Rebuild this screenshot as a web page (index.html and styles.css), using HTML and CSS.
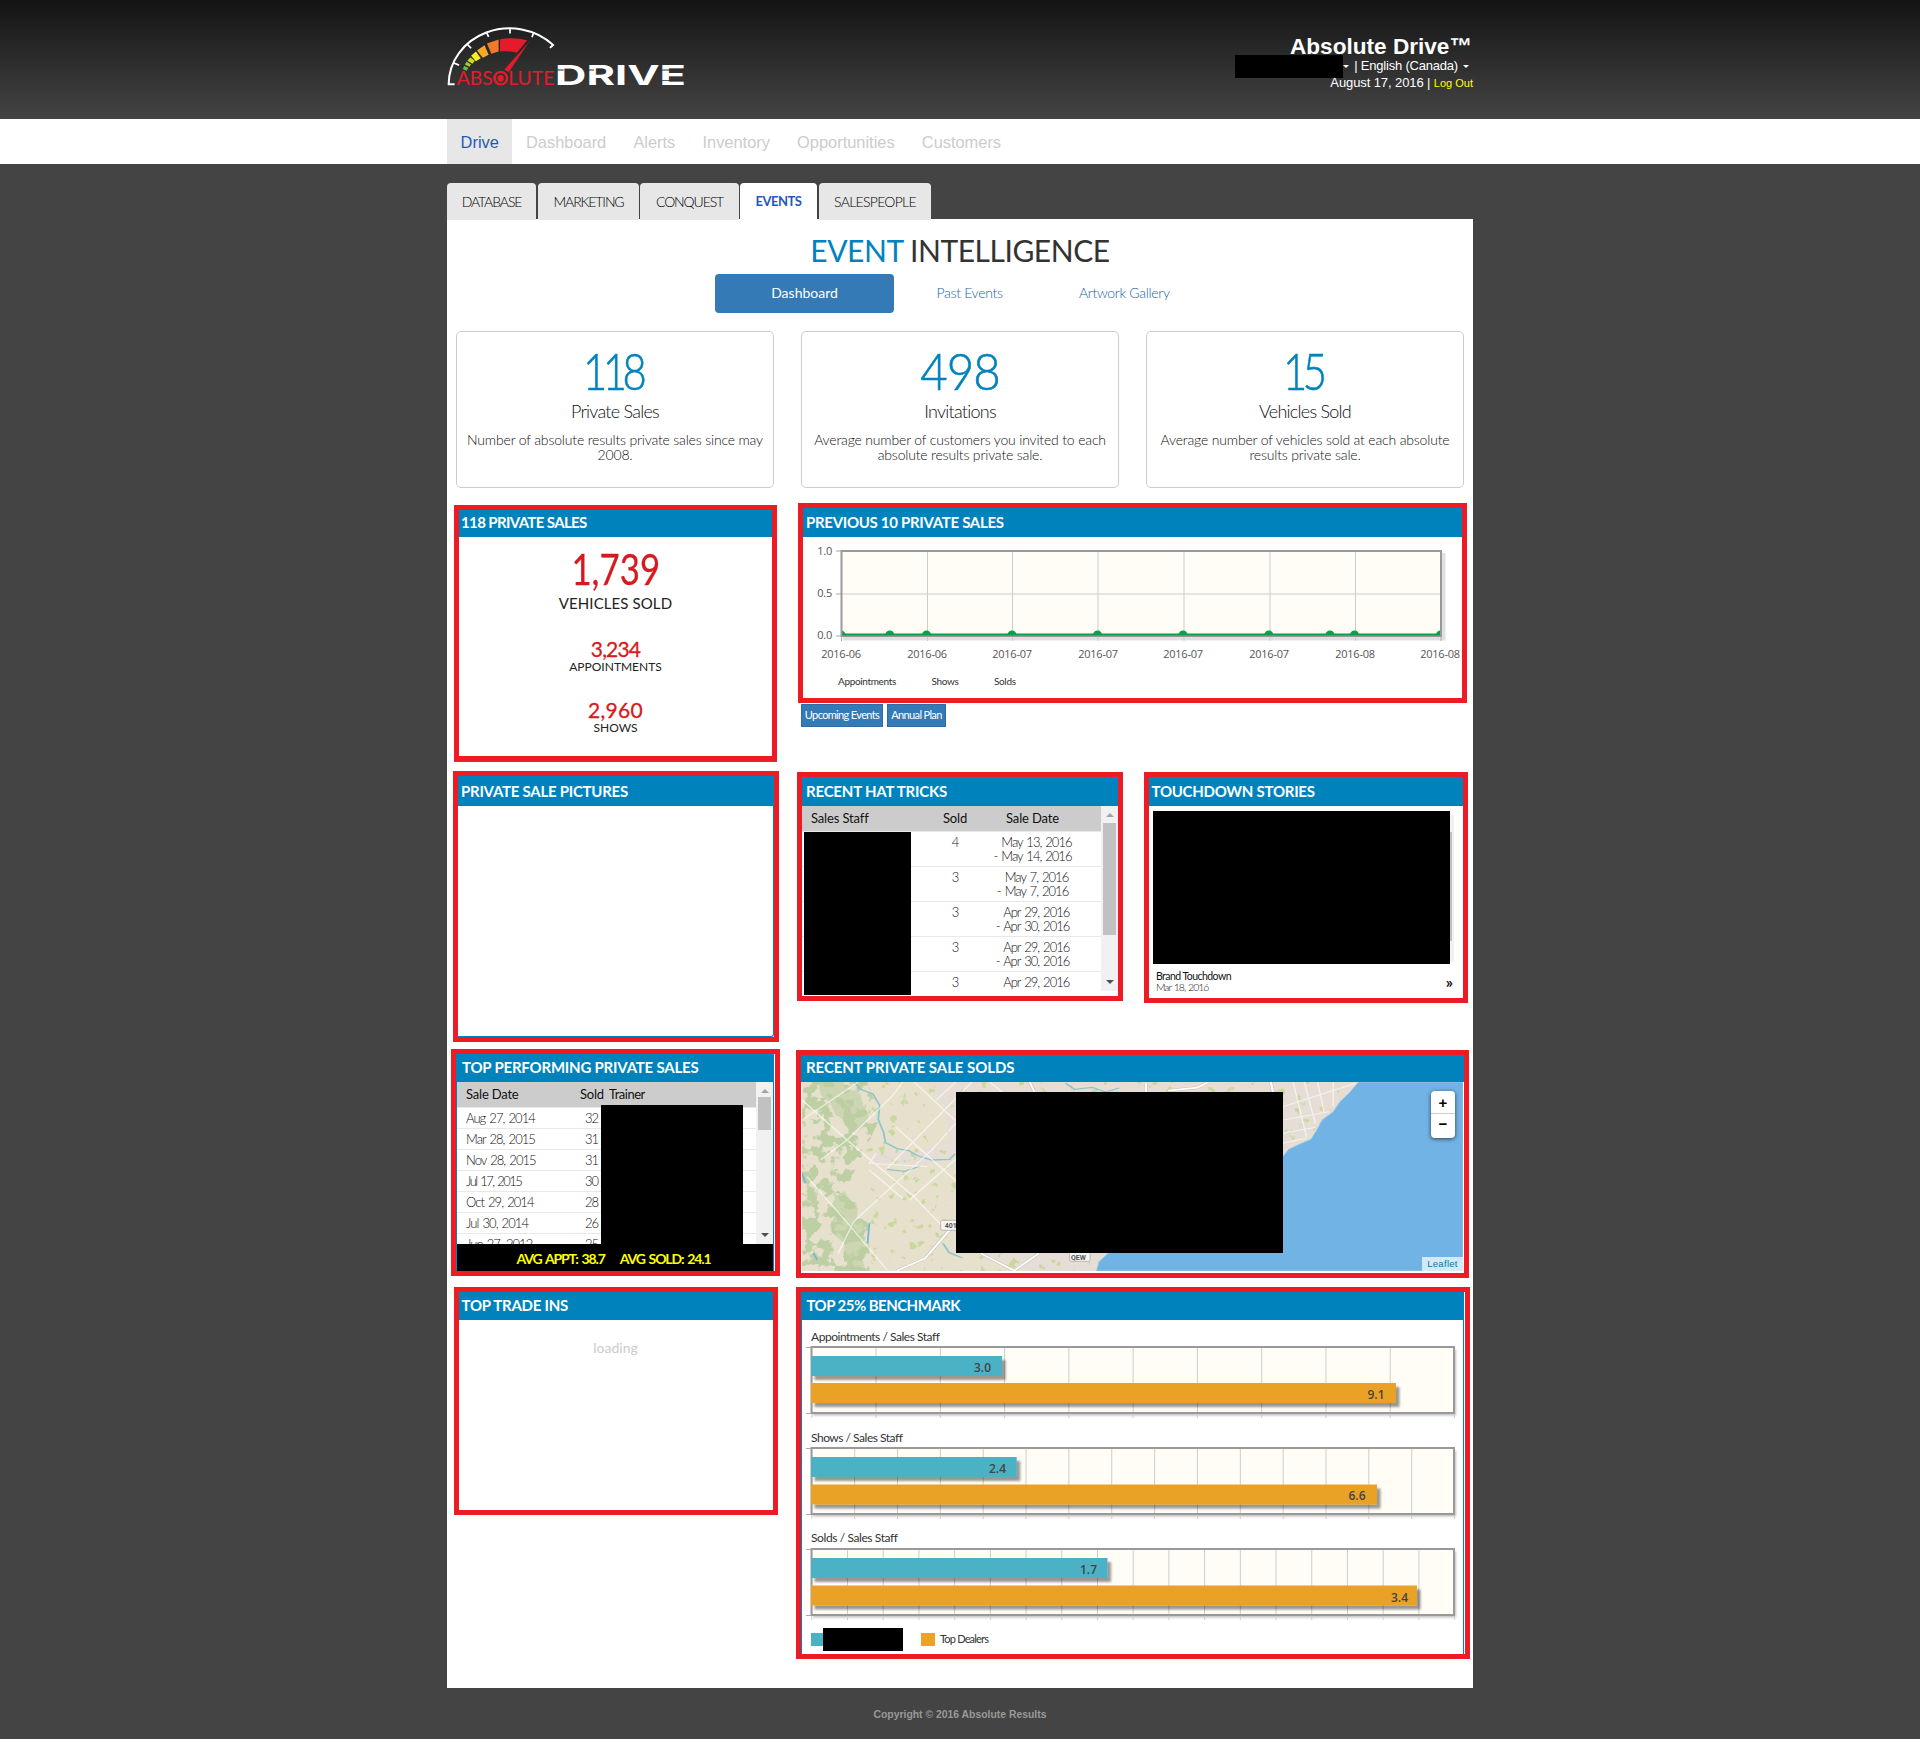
FILE: index.html
```
<!DOCTYPE html>
<html lang="en">
<head>
<meta charset="utf-8">
<title>Absolute Drive</title>
<link rel="stylesheet" href="styles.css">
</head>
<body>
<header class="top">
  <div class="wrap top-row">
    <svg class="logo" viewBox="49 75 700 190" preserveAspectRatio="none" role="img" aria-label="Absolute Drive">
      <g fill="none" stroke="#fff" stroke-width="6">
        <path d="M71 254H54A177 168 0 0 1 357 135L348 144"/>
        <path stroke-width="5" d="M67 189l17 7M108 133l11 12M164 98l6 13M232 86v15M301 97l-5 15"/>
      </g>
      <path fill="#e51b2b" d="M203 118Q245 110 282 121L252 159Q228 152 203 155Z"/>
      <path fill="#f07a2a" d="M165 131L199 119V155L178 162Z"/>
      <path fill="#faa927" d="M136 152L158 136L170 165L153 174Z"/>
      <path fill="#fdee1c" d="M119 168L133 155L147 175L133 184Z"/>
      <path fill="#cddc29" d="M108 183L117 173L130 183L123 192Z"/>
      <path fill="#9fce3a" d="M101 194L106 186L119 194L114 201Z"/>
      <path fill="#6cbd45" d="M95 208L99 199L111 204L106 213Z"/>
      <text class="logo-abs" x="77" y="257" textLength="284" lengthAdjust="spacingAndGlyphs">ABSOLUTE</text>
      <path fill="#e51b2b" stroke="#2c2c2c" stroke-width="2" d="M292 120L229 218L214 210Z"/>
      <ellipse cx="205" cy="236" rx="19" ry="19" fill="none" stroke="#e51b2b" stroke-width="5"/>
      <ellipse cx="205" cy="236" rx="9" ry="10" fill="#e51b2b"/>
      <text class="logo-drive" x="363" y="257" textLength="380" lengthAdjust="spacingAndGlyphs">DRIVE</text>
      <path stroke="#2e2e2e" stroke-width="3" d="M366 211H388M452 211H476M672 211H742M672 242H742"/>
    </svg>
    <div class="account">
      <div class="brand">Absolute Drive™</div>
      <div class="lang"><i class="caret"></i><span>| English (Canada)</span><i class="caret"></i></div>
      <div class="date"><span>August 17, 2016 |</span> <a>Log Out</a></div>
      <div class="redact"></div>
    </div>
  </div>
</header>
<nav class="main-nav"><div class="wrap nav-row">
  <a class="on">Drive</a><a>Dashboard</a><a>Alerts</a><a>Inventory</a><a>Opportunities</a><a>Customers</a>
</div></nav>

<div class="wrap tabs">
  <a class="t1">DATABASE</a><a class="t2">MARKETING</a><a class="t3">CONQUEST</a><a class="t4 on">EVENTS</a><a class="t5">SALESPEOPLE</a>
</div>

<main class="wrap page">
  <h1><span>EVENT</span> INTELLIGENCE</h1>
  <div class="pills"><a class="on">Dashboard</a><a class="p2">Past Events</a><a class="p3">Artwork Gallery</a></div>

  <section class="stats">
    <div class="stat"><b class="n118">118</b><h2>Private Sales</h2><p>Number of absolute results private sales since may<br>2008.</p></div>
    <div class="stat"><b>498</b><h2>Invitations</h2><p>Average number of customers you invited to each<br>absolute results private sale.</p></div>
    <div class="stat"><b class="n15">15</b><h2>Vehicles Sold</h2><p>Average number of vehicles sold at each absolute<br>results private sale.</p></div>
  </section>

  <section class="board">
    <article class="widget w-sales">
      <h3>118 PRIVATE SALES</h3>
      <div class="totals">
        <b class="big">1,739</b><span class="biglab">VEHICLES SOLD</span>
        <b>3,234</b><span>APPOINTMENTS</span>
        <b class="last">2,960</b><span>SHOWS</span>
      </div>
    </article>

    <div class="span2 prev-col">
      <article class="widget w-prev">
        <h3>PREVIOUS 10 PRIVATE SALES</h3>
        <svg class="chart" width="659" height="161" viewBox="803 537 659 161">
          <path d="M1443.500 553V638.500H843" fill="none" stroke="#000" stroke-opacity=".12" stroke-width="4"/>
          <rect x="841.500" y="551" width="599" height="84.500" fill="#fffdf6"/>
          <path d="M927.500 551v90M1012.500 551v90M1098 551v90M1184 551v90M1270 551v90M1355.500 551v90M841 594H1441" stroke="#ccc" fill="none"/>
          <path d="M836 551h6M836 594h6M836 636h6M841.500 636v5M1441 636v5" stroke="#aaa" fill="none"/>
          <g fill="#0a9f4b">
            <rect x="841" y="633.500" width="600" height="2"/>
            <path d="M841 630.500a4.500 4.500 0 0 1 4.500 4.500h-4.500zM885.300 635a4.500 4.500 0 0 1 9 0zM922 635a4.500 4.500 0 0 1 9 0zM1007.500 635a4.500 4.500 0 0 1 9 0zM1093 635a4.500 4.500 0 0 1 9 0zM1178.500 635a4.500 4.500 0 0 1 9 0zM1264.300 635a4.500 4.500 0 0 1 9 0zM1325.500 635a4.500 4.500 0 0 1 9 0zM1350 635a4.500 4.500 0 0 1 9 0zM1436 635a4.500 4.500 0 0 1 4.500-4.500v4.500z"/>
          </g>
          <rect x="841.500" y="551" width="599.500" height="85" fill="none" stroke="#999" stroke-width="2"/>
          <path d="M842.500 634.800H1440" stroke="#0a9f4b" stroke-width="1.600"/>
          <g class="axis" text-anchor="end"><text x="832" y="555">1.0</text><text x="832" y="597">0.5</text><text x="832" y="639">0.0</text></g>
          <g class="axis" text-anchor="middle"><text x="841" y="658">2016-06</text><text x="927" y="658">2016-06</text><text x="1012" y="658">2016-07</text><text x="1098" y="658">2016-07</text><text x="1183" y="658">2016-07</text><text x="1269" y="658">2016-07</text><text x="1355" y="658">2016-08</text><text x="1440" y="658">2016-08</text></g>
          <g class="legend10"><text x="838" y="685">Appointments</text><text x="931.500" y="685">Shows</text><text x="994" y="685">Solds</text></g>
        </svg>
      </article>
      <div class="buttons"><a>Upcoming Events</a><a class="plan">Annual Plan</a></div>
    </div>

    <article class="widget w-pics">
      <h3>PRIVATE SALE PICTURES</h3>
      <div class="pics"></div>
    </article>

    <article class="widget w-hat">
      <h3>RECENT HAT TRICKS</h3>
      <div class="scroller">
        <div class="rows">
          <div class="hrow head"><span>Sales Staff</span><span>Sold</span><span>Sale Date</span></div>
          <div class="hrow"><span></span><span>4</span><span><i>May 13, 2016<br>- May 14, 2016</i></span></div>
          <div class="hrow"><span></span><span>3</span><span><i>May 7, 2016<br>- May 7, 2016</i></span></div>
          <div class="hrow"><span></span><span>3</span><span><i>Apr 29, 2016<br>- Apr 30, 2016</i></span></div>
          <div class="hrow"><span></span><span>3</span><span><i>Apr 29, 2016<br>- Apr 30, 2016</i></span></div>
          <div class="hrow"><span></span><span>3</span><span><i>Apr 29, 2016<br>- Apr 30, 2016</i></span></div>
        </div>
        <div class="bar"><i class="up"></i><i class="thumb"></i><i class="down"></i></div>
      </div>
      <div class="redact"></div>
    </article>

    <article class="widget w-touch">
      <h3>TOUCHDOWN STORIES</h3>
      <div class="story"><div class="story-img"></div><div class="story-bar"><i></i></div></div>
      <div class="story-foot"><div><div class="story-name">Brand Touchdown</div><div class="story-date">Mar 18, 2016</div></div><span>»</span></div>
    </article>

    <article class="widget w-top">
      <h3>TOP PERFORMING PRIVATE SALES</h3>
      <div class="scroller">
        <div class="rows">
          <div class="trow head"><span>Sale Date</span><span>Sold</span><span>Trainer</span></div>
          <div class="trow"><span>Aug 27, 2014</span><span>32</span></div>
          <div class="trow"><span>Mar 28, 2015</span><span>31</span></div>
          <div class="trow"><span>Nov 28, 2015</span><span>31</span></div>
          <div class="trow"><span class="tight">Jul 17, 2015</span><span>30</span></div>
          <div class="trow"><span>Oct 29, 2014</span><span>28</span></div>
          <div class="trow"><span>Jul 30, 2014</span><span>26</span></div>
          <div class="trow"><span>Jun 27, 2012</span><span>25</span></div>
        </div>
        <div class="bar"><i class="up"></i><i class="thumb"></i><i class="down"></i></div>
      </div>
      <div class="avg"><span>AVG APPT: 38.7</span><span>AVG SOLD: 24.1</span></div>
      <div class="redact"></div>
    </article>

    <article class="widget w-map span2">
      <h3>RECENT PRIVATE SALE SOLDS</h3>
      <div class="map">
        <svg width="661" height="189" viewBox="49 126 1482 567" preserveAspectRatio="none">
          <defs>
            <filter id="woods" x="0" y="0" width="1" height="1" color-interpolation-filters="sRGB"><feTurbulence type="fractalNoise" baseFrequency=".035 .028" numOctaves="4" seed="8"/><feColorMatrix values="0 0 0 0 .74  0 0 0 0 .81  0 0 0 0 .64  14 0 0 0 -6.800"/><feComposite in2="SourceGraphic" operator="in"/></filter>
            <filter id="groves" x="0" y="0" width="1" height="1" color-interpolation-filters="sRGB"><feTurbulence type="fractalNoise" baseFrequency=".045 .035" numOctaves="3" seed="21"/><feColorMatrix values="0 0 0 0 .79  0 0 0 0 .85  0 0 0 0 .62  14 0 0 0 -9.200"/><feComposite in2="SourceGraphic" operator="in"/></filter>
          </defs>
          <path fill="#e6e0cd" d="M49 126H1531V693H49Z"/>
          <path fill="#e6ddd6" d="M330 126H1300L1240 215L1190 295L1127 345V600L700 693H560L450 640L400 600V340L300 380L200 370L215 330L300 340L380 300L370 200Z"/>
          <path filter="url(#groves)" fill="#000" d="M200 126H1290L1180 300L1127 345V500L700 693H180Z"/>
          <path filter="url(#woods)" fill="#000" d="M49 126H195L225 230L190 330L150 440L200 560V693H49Z"/>
          <path fill="#bccfa2" fill-opacity=".6" d="M115 445l12 22 18-14 12 32 18 20-4 30 20 26-12 34 14 28-8 34 6 36h-30l-6-30-14-22 4-30-20-22-14-30 10-28-8-30 10-24zM85 126h56l12 20 26 14 8 40 12 30-14 34-20 14-16-34-24-18-14-40-20-20z"/>
          <g fill="none" stroke="#8ec4cf" stroke-width="4">
            <path d="M165 126l15 22 28 14 15 34-3 42 12 40 4 30 26 18 26 6 22 16 30 12 40-2 12-16"/>
            <path d="M240 388l40 6 34-16M365 610l14 28 30 16M640 130l20 18 40-6 30 14 30-12"/>
            <path stroke="#73b3e4" d="M200 550l-4 60M49 400l8 30M75 640l8 20"/>
          </g>
          <g fill="none" stroke="#fff" stroke-opacity=".6" stroke-width="3.500">
            <path d="M49 180L150 300L300 470L365 560M49 240L175 126M60 410L155 555L240 690M90 360L150 300L250 170L275 126M165 545L340 330L400 240M240 385L430 126M215 340L200 370L330 380M260 262L400 430M275 475L200 390M300 126L400 250M130 640L165 545M470 126L520 180M350 180L394 126M290 480L400 350"/>
            <path stroke-width="3" d="M1127 200L1290 130M1127 240L1230 215M1127 280L1200 262M1150 126L1180 290M1175 126L1200 250M1205 126L1220 220M1240 126V200M1127 310L1180 295"/>
          </g>
          <g fill="none" stroke="#c9c1ba" stroke-width="8"><path d="M262 692L325 655L380 570L400 540M450 640L525 692L580 640M560 126L570 156M870 152L935 143L960 126M820 130V156M1100 126L1105 156"/></g>
          <g fill="none" stroke="#fff" stroke-width="5"><path d="M262 692L325 655L380 570L400 540M450 640L525 692L580 640M560 126L570 156M870 152L935 143L960 126M820 130V156M1100 126L1105 156"/></g>
          <path fill="#72b3e5" stroke="#9ad0dc" stroke-width="2" d="M1297 126L1275 160L1255 185L1240 215L1215 240L1203 270L1190 298L1160 315L1140 328L1127 350L900 560L735 640L715 665L709 693H1531V126Z"/>
          <rect x="360" y="541" width="44" height="30" rx="4" fill="#f7f5f2" stroke="#aaa" stroke-width="2"/>
          <rect x="649" y="636" width="46" height="28" rx="4" fill="#f7f5f2" stroke="#aaa" stroke-width="2"/>
          <g class="shield"><text transform="translate(369 564) scale(2.240 3)">401</text><text transform="translate(652 661) scale(2.240 3)">QEW</text></g>
        </svg>
        <div class="redact"></div>
        <div class="zoom"><span>+</span><span>−</span></div>
        <div class="leaflet">Leaflet</div>
      </div>
    </article>

    <article class="widget w-trade">
      <h3>TOP TRADE INS</h3>
      <div class="loading">loading</div>
    </article>

    <article class="widget w-bench span2">
      <h3>TOP 25% BENCHMARK</h3>
      <svg class="chart" width="661" height="334" viewBox="802 1320 661 334">
        <defs>
          <pattern id="g10" patternUnits="userSpaceOnUse" x="811.300" y="0" width="64.270" height="2000"><path d="M.5 0V2000" stroke="#ccc"/></pattern>
          <pattern id="g15" patternUnits="userSpaceOnUse" x="811.300" y="0" width="42.850" height="2000"><path d="M.5 0V2000" stroke="#ccc"/></pattern>
          <pattern id="g18" patternUnits="userSpaceOnUse" x="811.300" y="0" width="35.710" height="2000"><path d="M.5 0V2000" stroke="#ccc"/></pattern>
          <filter id="sh" x="-5%" y="-20%" width="110%" height="160%"><feDropShadow dx="3.500" dy="4" stdDeviation="1.300" flood-opacity=".4"/></filter>
          <filter id="fr" x="-2%" y="-5%" width="104%" height="115%"><feDropShadow dx="2" dy="2.500" stdDeviation="1" flood-opacity=".25"/></filter>
          <clipPath id="plots"><path d="M811 1340H1470V1660H811Z"/></clipPath>
        </defs>
        <g class="bench-lab"><text x="811" y="1340.500" textLength="129">Appointments / Sales Staff</text><text x="811" y="1441.500" textLength="92">Shows / Sales Staff</text><text x="811" y="1542" textLength="87">Solds / Sales Staff</text></g>
        <g fill="#fffdf6" filter="url(#fr)"><rect x="811" y="1347" width="643" height="66"/><rect x="811" y="1448" width="643" height="66"/><rect x="811" y="1549" width="643" height="66"/></g>
        <rect x="811" y="1347" width="644" height="71" fill="url(#g10)"/>
        <rect x="811" y="1448" width="644" height="71" fill="url(#g15)"/>
        <rect x="811" y="1549" width="644" height="71" fill="url(#g18)"/>
        <g fill="none" stroke="#999" stroke-width="2"><rect x="811.500" y="1347" width="642.500" height="66"/><rect x="811.500" y="1448" width="642.500" height="66"/><rect x="811.500" y="1549" width="642.500" height="66"/></g>
        <g clip-path="url(#plots)">
          <g fill="#4bb2c5" filter="url(#sh)"><rect x="811" y="1356" width="191" height="20"/><rect x="811" y="1457" width="205.700" height="20"/><rect x="811" y="1558" width="296.500" height="20"/></g>
          <g fill="#eaa228" filter="url(#sh)"><rect x="811" y="1383" width="585" height="20"/><rect x="811" y="1484.500" width="566" height="20"/><rect x="811" y="1585.500" width="606" height="20"/></g>
        </g>
        <path stroke="#aaa" d="M806 1347.500h5M806 1413.500h5M806 1448.500h5M806 1514.500h5M806 1549.500h5M806 1615.500h5"/>
        <g class="val" text-anchor="end"><text x="991" y="1372">3.0</text><text x="1384.500" y="1399">9.1</text><text x="1006" y="1473">2.4</text><text x="1365.500" y="1500">6.6</text><text x="1097" y="1574">1.7</text><text x="1408" y="1602">3.4</text></g>
        <rect x="811" y="1633" width="14" height="13" fill="#4bb2c5"/><rect x="823" y="1628" width="80" height="23"/>
        <rect x="921" y="1633" width="14" height="13" fill="#eaa228"/>
        <text class="legend11" x="940" y="1642.500" textLength="49">Top Dealers</text>
      </svg>
    </article>
  </section>
</main>
<footer>Copyright © 2016 Absolute Results</footer>
</body>
</html>
```
FILE: styles.css
```
* { box-sizing: border-box; }
body { margin: 0; background: #444; color: #111; font: 300 14px/1 Lato, sans-serif; min-height: 1739px; }
h1, h2, h3, p { margin: 0; font-weight: inherit; }
i { font-style: normal; }
.wrap { width: 1026px; margin: 0 auto; }
.redact { position: absolute; background: #000; }

/* header */
.top { height: 119px; background: linear-gradient(#141414, #444); }
.top-row { display: flex; justify-content: space-between; }
.logo { width: 241px; height: 63px; margin-top: 25px; }
.logo-abs { font: 400 60px Lato, sans-serif; fill: #e51b2b; }
.logo-drive { font: 700 82px Inter, sans-serif; fill: #fff; }
.account { position: relative; padding-top: 35px; color: #fff; font: 13px/17px "Liberation Sans", Arial, sans-serif; text-align: right; }
.brand { font-size: 22.600px; font-weight: bold; line-height: 24px; padding-right: 1px; }
.lang { height: 15px; line-height: 11px; display: flex; justify-content: flex-end; align-items: flex-start; padding-top: 1px; gap: 5px; padding-right: 4px; letter-spacing: -.2px; }
.date { line-height: 18px; letter-spacing: -.1px; }
.date a { color: #ff0; font-size: 11px; letter-spacing: 0; }
.caret { border: 3.500px solid transparent; border-top-color: #fff; border-bottom: 0; margin-top: 5px; }
.account .redact { right: 130px; top: 55px; width: 108px; height: 23px; }

.main-nav { height: 45px; background: #fff; }
.nav-row { display: flex; }
.nav-row a { padding: 0 13.600px; font: 16.400px/47px "Liberation Sans", Arial, sans-serif; height: 45px; color: #ccc; }
.nav-row .on { background: #e7e7e7; color: #1f5bb5; }

.tabs { display: flex; margin-top: 19px; margin-bottom: -1px; position: relative; }
.tabs a { height: 37px; line-height: 37px; background: #e7e7e7; color: #000; text-align: center; border-radius: 4px 4px 0 0; letter-spacing: -1.100px; }
.t1 { width: 89px; margin-right: 2px; }
.t2 { width: 101px; margin-right: 1px; }
.t3 { width: 99px; margin-right: 1px; }
.t4 { width: 77px; margin-right: 2px; }
.t5 { width: 112px; }
.tabs .t5 { letter-spacing: -.7px; }
.tabs .on { background: #fff; color: #1f5bb5; font-weight: 700; font-size: 13px; letter-spacing: -.5px; }

/* page */
.page { background: #fff; height: 1469px; }
h1 { height: 55px; padding-top: 13px; font-size: 30px; line-height: 36px; font-weight: 400; text-align: center; color: #333; letter-spacing: -.45px; }
h1 span { color: #0083bd; }
.pills { display: flex; height: 39px; padding-left: 268px; line-height: 38px; color: #1d63a5; }
.pills a { letter-spacing: -.3px; }
.pills .on { width: 179px; text-align: center; background: #337ab7; color: #fff; border-radius: 4px; font-weight: 400; letter-spacing: 0; }
.p2 { margin-left: 42.500px; width: 142.500px; }
.stats { display: flex; gap: 27px; padding: 18px 9px 0; }
.stat { width: 318px; height: 157px; border: 1px solid #ccc; border-radius: 5px; text-align: center; }
.stat b { display: block; margin-top: 11px; height: 56px; font-size: 51px; line-height: 56px; font-weight: 300; color: #0083bd; letter-spacing: -1px; transform: scaleX(.93); -webkit-text-stroke: .6px #0083bd; }
.stat .n118, .stat .n15 { letter-spacing: -5.500px; text-indent: -5.500px; transform: scaleX(.82); }
.stat h2 { font-size: 18px; line-height: 24px; letter-spacing: -.75px; }
.stat p { margin-top: 9px; line-height: 15px; letter-spacing: -.17px; }

.board { display: grid; grid-template-columns: 349px 344px 333px; grid-template-rows: 268px 278px 238px 400px; padding-top: 15px; }
.span2 { grid-column: span 2; }
.widget { position: relative; border: 5px solid #ed1c24; background: #fff; }
.widget h3 { display: flex; align-items: flex-end; height: 28px; background: #0083bd; color: #fff; font: 700 15px/30px Lato, sans-serif; letter-spacing: -.26px; padding-left: 6px; white-space: nowrap; }
.chart { display: block; }

.w-sales { margin: 2px 0 0 7px; width: 323px; height: 256px; box-shadow: 0 1px 0 #0083bd; }
.w-sales h3 { height: 27px; padding-left: 2px; letter-spacing: -.63px; }
.totals { display: flex; flex-direction: column; align-items: center; color: #222; }
.totals b { font-weight: 400; color: #d71920; font-size: 21px; line-height: 24px; margin-top: 25px; letter-spacing: -.8px; -webkit-text-stroke: .3px #d71920; }
.totals .big { font-size: 43px; line-height: 40px; margin-top: 12px; letter-spacing: 0; transform: scaleX(.81); }
.totals span { font-size: 12px; line-height: 12px; font-weight: 400; }
.totals .biglab { font-size: 15px; line-height: 18px; margin-top: 5px; letter-spacing: .1px; }
.totals .last { letter-spacing: .3px; }

.w-prev { margin-left: 2px; width: 669px; height: 200px; }
.w-prev h3 { height: 29px; padding-left: 3px; letter-spacing: -.3px; }
.axis { font: 11px "Open Sans", sans-serif; letter-spacing: -.25px; fill: #555; }
.legend10 { font: 400 10px Lato, sans-serif; letter-spacing: -.35px; fill: #333; }
.legend11 { font: 400 11px Lato, sans-serif; fill: #333; }
.buttons { display: flex; gap: 4px; margin: 1px 0 0 5px; }
.buttons a { width: 82px; height: 23px; background: #337ab7; border: 1px solid #2e6da4; color: #fff; font: 400 11px/20px Lato, sans-serif; text-align: center; letter-spacing: -.65px; white-space: nowrap; }
.buttons .plan { width: 59px; }

.w-pics { margin-left: 6px; width: 326px; height: 271px; }
.w-pics h3 { height: 30px; padding-left: 3px; width: 316px; }
.pics { width: 316px; height: 231px; border: solid #0083bd; border-width: 0 1px 1px 0; border-radius: 0 0 3px 0; }

.scroller { display: flex; overflow: hidden; }
.rows { font-size: 13px; color: #111; }
.bar { width: 17px; background: #f1f1f1; display: flex; flex-direction: column; align-items: center; }
.up { border: 4px solid transparent; border-bottom-color: #a3a3a3; border-top: 0; margin-top: 7px; }
.thumb { width: 13px; background: #c1c1c1; margin-top: 6px; }
.down { border: 4px solid transparent; border-top-color: #505050; border-bottom: 0; margin: auto 0 7px; }

.w-hat { margin: 1px 0 0 1px; width: 326px; height: 229px; }
.w-hat h3 { height: 29px; padding-left: 4px; letter-spacing: -.2px; }
.w-hat .scroller { height: 185px; }
.hrow { display: grid; grid-template-columns: 133px 40px 126px; height: 35px; border-bottom: 1px solid #e8e8e8; padding-top: 3px; line-height: 14px; text-align: center; letter-spacing: -1px; word-spacing: 1.500px; }
.hrow i { display: inline-block; text-align: right; margin-right: 11px; }
.w-hat .head { height: 26px; background: #ccc; padding-top: 0; line-height: 25px; font-weight: 400; letter-spacing: -.15px; word-spacing: 0; }
.head span:first-child { text-align: left; padding-left: 9px; }
.w-hat .head span:last-child { padding-right: 11px; }
.w-hat .thumb { height: 112px; }
.w-hat .redact { left: 2px; top: 55px; width: 107px; height: 163px; }

.w-touch { margin: 1px 0 0 4px; width: 324px; height: 231px; }
.w-touch h3 { height: 29px; padding-left: 2.500px; }
.story { display: flex; padding: 5px 0 0 4px; }
.story-img { width: 297px; height: 153px; background: #000; }
.story-bar { width: 4px; height: 147px; margin-top: 4px; background: #f1f1f1; }
.story-bar i { display: block; width: 2px; height: 109px; margin-top: 17px; background: #c1c1c1; }
.story-foot { display: flex; justify-content: space-between; padding: 7px 10px 0 7px; font-size: 11px; line-height: 11px; white-space: nowrap; }
.story-name { font-weight: 400; font-size: 10.500px; letter-spacing: -.55px; }
.story-date { font-size: 10.500px; letter-spacing: -1px; word-spacing: 1px; }
.story-foot span { font-size: 16px; font-weight: 700; line-height: 22px; }

.w-top { margin-left: 4px; width: 329px; height: 227px; }
.w-top h3 { width: 318px; letter-spacing: -.21px; }
.w-top .scroller { height: 162px; width: 318px; border: solid #0083bd; border-width: 0 1px; }
.w-top .rows { width: 299px; }
.w-top .bar { width: 17px; }
.trow { display: grid; grid-template-columns: 125px 20px 1fr; height: 21px; line-height: 20px; border-bottom: 1px solid #e8e8e8; letter-spacing: -.95px; word-spacing: 1.500px; white-space: nowrap; }
.trow span:first-child { padding-left: 9px; }
.trow span:nth-child(2) { text-align: center; margin-left: -1px; }
.trow .tight { letter-spacing: -1.500px; }
.w-top .head { height: 26px; line-height: 25px; background: #ccc; font-weight: 400; letter-spacing: -.2px; word-spacing: 0; }
.w-top .head span:nth-child(2) { margin-left: -2px; }
.w-top .head span:nth-child(3) { padding-left: 7px; letter-spacing: -.5px; }
.w-top .thumb { height: 33px; margin-top: 4px; }
.avg { display: flex; gap: 15px; width: 318px; height: 27px; border: solid #0083bd; border-width: 0 1px; padding-left: 59.500px; background: #000; background-clip: padding-box; color: #ff0; font: 700 14px/29px Lato, sans-serif; letter-spacing: -1.150px; word-spacing: 1.700px; white-space: nowrap; }
.w-top .redact { left: 145px; top: 51px; width: 142px; height: 140px; }

.w-map { margin-top: 1px; width: 673px; height: 228px; }
.w-map h3 { height: 27px; letter-spacing: -.07px; padding-left: 5px; }
.map { position: relative; width: 661px; height: 189px; margin-left: 1px; overflow: hidden; }
.map svg { display: block; }
.shield { font: 700 7px Roboto, sans-serif; fill: #555; }
.map .redact { left: 154px; top: 10px; width: 327px; height: 161px; }
.zoom { position: absolute; right: 8px; top: 9px; width: 24px; height: 47px; background: #fff; border-radius: 4px; box-shadow: 0 1px 4px rgba(0,0,0,.65); color: #000; text-align: center; font: bold 15px/20px "Liberation Sans", sans-serif; }
.zoom span { display: block; height: 23px; }
.zoom span:first-child { border-bottom: 1px solid #ccc; line-height: 24px; }
.leaflet { position: absolute; right: 0; bottom: 0; width: 41px; height: 14px; background: rgba(255,255,255,.7); color: #0078a8; font: 9.500px/14px "Liberation Sans", sans-serif; text-align: center; letter-spacing: .3px; }

.w-trade { margin-left: 7px; width: 324px; height: 228px; }
.w-trade h3 { padding-left: 2.500px; }
.loading { padding-top: 20px; text-align: center; font-weight: 400; color: #ccc; line-height: 16px; padding-right: 1px; }

.w-bench { width: 674px; height: 372px; }
.w-bench h3 { width: 663px; letter-spacing: -.54px; padding-left: 5.500px; }
.w-bench .chart { box-sizing: content-box; border: solid #0083bd; border-width: 0 1px; }
.bench-lab { font: 400 12px Lato, sans-serif; fill: #333; }
.val { font: 600 12px "Open Sans", sans-serif; fill: #444; }

footer { padding-top: 21px; text-align: center; color: #999; font: bold 10.400px/12px "Liberation Sans", sans-serif; }
```
